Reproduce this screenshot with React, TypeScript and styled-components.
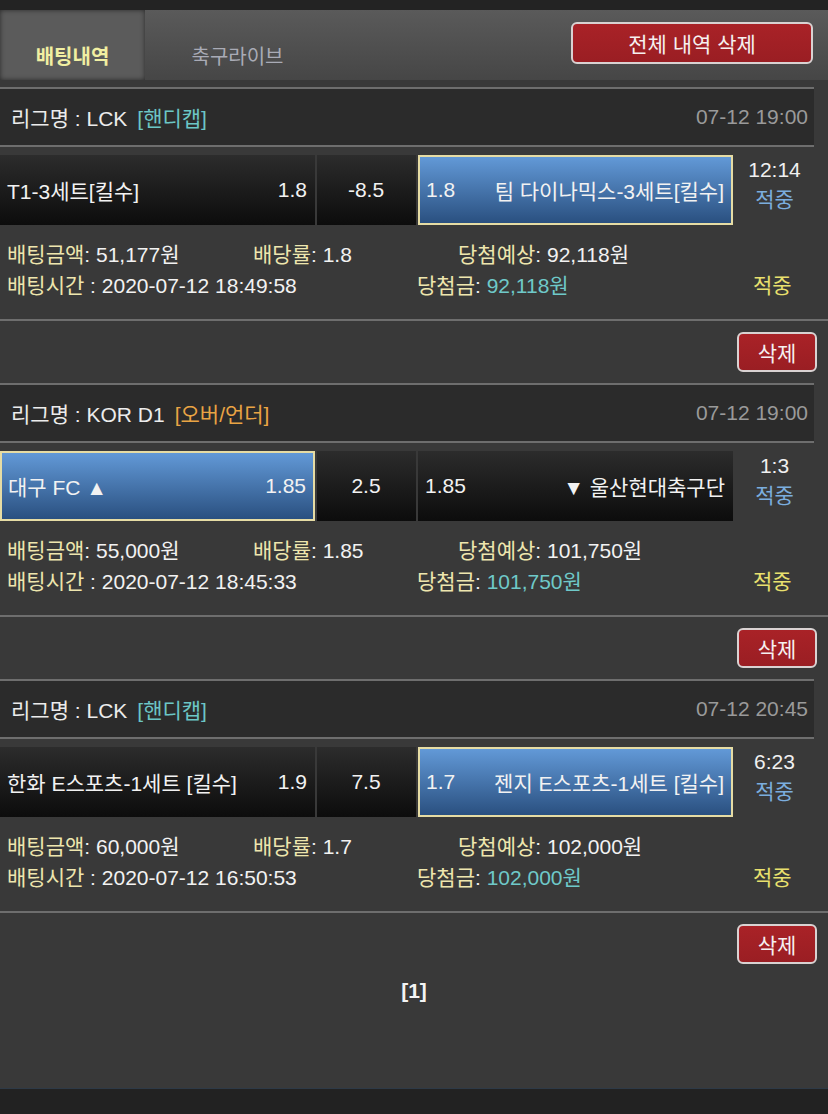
import React from "react";
import styled, { createGlobalStyle } from "styled-components";

const GlobalStyle = createGlobalStyle`
  body {
    margin: 0;
    background: #393939;
    font-family: "Liberation Sans", "Noto Sans CJK KR", sans-serif;
    color: #f0f0f0;
  }
`;

const Page = styled.div`
  display: flex;
  flex-direction: column;
  min-height: 1114px;
`;

const TopStrip = styled.div`
  height: 10px;
  background: #232323;
`;

const TabBar = styled.div`
  display: flex;
  height: 70px;
  background: linear-gradient(#5a5a5a, #464646);
`;

const Tab = styled.div<{ $active?: boolean }>`
  width: ${(p) => (p.$active ? "145px" : "185px")};
  display: flex;
  align-items: flex-end;
  justify-content: center;
  padding-bottom: 11px;
  box-sizing: border-box;
  font-size: 20px;
  line-height: 24px;
  font-weight: ${(p) => (p.$active ? 700 : 400)};
  color: ${(p) => (p.$active ? "#f1efa2" : "#a9abb6")};
  background: ${(p) => (p.$active ? "#5b5b5b" : "transparent")};
  box-shadow: ${(p) => (p.$active ? "inset 0 0 5px rgba(0,0,0,0.55)" : "none")};
`;

const Spacer = styled.div`
  flex: 1;
`;

const RedButton = styled.button<{ $wide?: boolean }>`
  width: ${(p) => (p.$wide ? "242px" : "80px")};
  height: ${(p) => (p.$wide ? "42px" : "40px")};
  background: linear-gradient(#a92227, #9a1e23);
  border: 2px solid #d9d2d2;
  border-radius: 6px;
  color: #f6f0f0;
  font-family: "Liberation Sans", "Noto Sans CJK KR", sans-serif;
  font-size: 21px;
  padding: 0;
  cursor: pointer;
`;

const TopAction = styled.div`
  padding: 12px 15px 0 0;
`;

const List = styled.div`
  flex: 1;
  padding-top: 7px;
  display: flex;
  flex-direction: column;
`;

const LeagueHeader = styled.div`
  margin-right: 14px;
  height: 56px;
  border-top: 2px solid #6e6e6e;
  border-bottom: 2px solid #6e6e6e;
  background: #2b2b2b;
  display: flex;
  align-items: center;
  justify-content: space-between;
  padding: 0 6px 0 11px;
  font-size: 21px;
`;

const LeagueName = styled.span`
  color: #ececec;
`;

const BetType = styled.span<{ $color: string }>`
  color: ${(p) => p.$color};
  margin-left: 10px;
`;

const MatchTime = styled.span`
  color: #9a9a9a;
`;

const BetRow = styled.div`
  margin: 8px 14px 0 0;
  height: 70px;
  display: flex;
  gap: 2px;
`;

const Cell = styled.div<{ $w: number; $selected?: boolean; $center?: boolean }>`
  width: ${(p) => p.$w}px;
  box-sizing: border-box;
  display: flex;
  align-items: center;
  justify-content: ${(p) => (p.$center ? "center" : "space-between")};
  padding: 0 ${(p) => (p.$selected ? 7 : 8)}px 0 ${(p) => (p.$selected ? 6 : 7)}px;
  font-size: 21px;
  color: #f2f2f2;
  white-space: nowrap;
  background: ${(p) =>
    p.$selected
      ? "linear-gradient(#6299d7, #2a5080)"
      : "linear-gradient(#2c2c2c, #0c0c0c)"};
  border: ${(p) => (p.$selected ? "2px solid #e6dca4" : "none")};
`;

const ScoreCol = styled.div`
  flex: 1;
  display: flex;
  flex-direction: column;
  align-items: center;
  font-size: 21px;
  line-height: 30px;
`;

const Score = styled.span`
  color: #f0f0f0;
`;

const Hit = styled.span<{ $color: string }>`
  color: ${(p) => p.$color};
`;

const Info = styled.div`
  padding: 14px 0 18px 7px;
  font-size: 21px;
  line-height: 31px;
`;

const InfoLine = styled.div`
  display: flex;
  white-space: nowrap;
`;

const InfoItem = styled.div<{ $w?: number }>`
  width: ${(p) => (p.$w ? `${p.$w}px` : "auto")};
  flex-shrink: 0;
`;

const Label = styled.span`
  color: #eee6ae;
`;

const Value = styled.span<{ $accent?: boolean }>`
  color: ${(p) => (p.$accent ? "#6fc9c9" : "#f2f2f2")};
`;

const Divider = styled.div`
  border-top: 2px solid #6e6e6e;
`;

const Actions = styled.div`
  display: flex;
  justify-content: flex-end;
  padding: 11px 11px 11px 0;
`;

const Pager = styled.div`
  text-align: center;
  font-size: 21px;
  font-weight: 700;
  line-height: 32px;
  color: #f4f4f4;
`;

const Footer = styled.div`
  height: 25px;
  background: #222222;
  border-top: 1px solid #2e3a47;
`;

type Bet = {
  league: string;
  type: string;
  typeColor: string;
  time: string;
  home: string;
  homeOdds: string;
  line: string;
  awayOdds: string;
  away: string;
  pick: "home" | "away";
  score: string;
  amount: string;
  rate: string;
  expected: string;
  betTime: string;
  won: string;
};

const bets: Bet[] = [
  {
    league: "LCK",
    type: "[핸디캡]",
    typeColor: "#6cc6c6",
    time: "07-12 19:00",
    home: "T1-3세트[킬수]",
    homeOdds: "1.8",
    line: "-8.5",
    awayOdds: "1.8",
    away: "팀 다이나믹스-3세트[킬수]",
    pick: "away",
    score: "12:14",
    amount: "51,177원",
    rate: "1.8",
    expected: "92,118원",
    betTime: "2020-07-12 18:49:58",
    won: "92,118원",
  },
  {
    league: "KOR D1",
    type: "[오버/언더]",
    typeColor: "#e9a444",
    time: "07-12 19:00",
    home: "대구 FC ▲",
    homeOdds: "1.85",
    line: "2.5",
    awayOdds: "1.85",
    away: "▼ 울산현대축구단",
    pick: "home",
    score: "1:3",
    amount: "55,000원",
    rate: "1.85",
    expected: "101,750원",
    betTime: "2020-07-12 18:45:33",
    won: "101,750원",
  },
  {
    league: "LCK",
    type: "[핸디캡]",
    typeColor: "#6cc6c6",
    time: "07-12 20:45",
    home: "한화 E스포츠-1세트 [킬수]",
    homeOdds: "1.9",
    line: "7.5",
    awayOdds: "1.7",
    away: "젠지 E스포츠-1세트 [킬수]",
    pick: "away",
    score: "6:23",
    amount: "60,000원",
    rate: "1.7",
    expected: "102,000원",
    betTime: "2020-07-12 16:50:53",
    won: "102,000원",
  },
];

const BetCard = ({ bet }: { bet: Bet }) => (
  <div>
    <LeagueHeader>
      <div>
        <LeagueName>리그명 : {bet.league}</LeagueName>
        <BetType $color={bet.typeColor}>{bet.type}</BetType>
      </div>
      <MatchTime>{bet.time}</MatchTime>
    </LeagueHeader>
    <BetRow>
      <Cell $w={315} $selected={bet.pick === "home"}>
        <span>{bet.home}</span>
        <span>{bet.homeOdds}</span>
      </Cell>
      <Cell $w={99} $center>
        {bet.line}
      </Cell>
      <Cell $w={315} $selected={bet.pick === "away"}>
        <span>{bet.awayOdds}</span>
        <span>{bet.away}</span>
      </Cell>
      <ScoreCol>
        <Score>{bet.score}</Score>
        <Hit $color="#7badde">적중</Hit>
      </ScoreCol>
    </BetRow>
    <Info>
      <InfoLine>
        <InfoItem $w={246}>
          <Label>배팅금액</Label>: <Value>{bet.amount}</Value>
        </InfoItem>
        <InfoItem $w={205}>
          <Label>배당률</Label>: <Value>{bet.rate}</Value>
        </InfoItem>
        <InfoItem>
          <Label>당첨예상</Label>: <Value>{bet.expected}</Value>
        </InfoItem>
      </InfoLine>
      <InfoLine>
        <InfoItem $w={410}>
          <Label>배팅시간</Label> : <Value>{bet.betTime}</Value>
        </InfoItem>
        <InfoItem $w={336}>
          <Label>당첨금</Label>: <Value $accent>{bet.won}</Value>
        </InfoItem>
        <InfoItem>
          <Hit $color="#e9e06e">적중</Hit>
        </InfoItem>
      </InfoLine>
    </Info>
    <Divider />
    <Actions>
      <RedButton>삭제</RedButton>
    </Actions>
  </div>
);

const App = () => {
  return (
    <Page>
      <GlobalStyle />
      <TopStrip />
      <TabBar>
        <Tab $active>배팅내역</Tab>
        <Tab>축구라이브</Tab>
        <Spacer />
        <TopAction>
          <RedButton $wide>전체 내역 삭제</RedButton>
        </TopAction>
      </TabBar>
      <List>
        {bets.map((bet, i) => (
          <BetCard key={i} bet={bet} />
        ))}
        <Pager>[1]</Pager>
      </List>
      <Footer />
    </Page>
  );
};

export default App;
